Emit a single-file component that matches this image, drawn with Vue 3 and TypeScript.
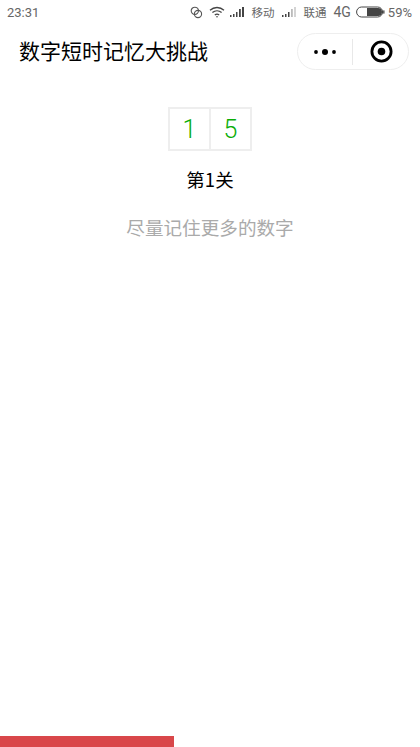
<script setup lang="ts">
const digits: string[] = ['1', '5']
const progress = 41.4
</script>

<template>
  <div class="page">
    <div class="status">
      <span class="time">23:31</span>
      <div class="status-right">
        <svg class="ico" width="13" height="13" viewBox="0 0 14 14" fill="none" stroke="#555" stroke-width="1.2">
          <circle cx="5.2" cy="5.2" r="3.9" />
          <circle cx="8.6" cy="8.6" r="3.9" />
        </svg>
        <svg class="ico wifi" width="16" height="12" viewBox="0 0 16 12" fill="none" stroke="#444" stroke-width="1.3">
          <path d="M1 4.2C5 .6 11 .6 15 4.2" />
          <path d="M3.4 6.6c2.7-2.3 6.5-2.3 9.2 0" />
          <path d="M5.8 9c1.3-1 3.1-1 4.4 0" />
          <circle cx="8" cy="10.8" r=".8" fill="#444" stroke="none" />
        </svg>
        <svg class="ico sig" width="15" height="10" viewBox="0 0 15 10" fill="#444">
          <rect x="0" y="8" width="1.5" height="2" />
          <rect x="3" y="7" width="1.5" height="3" />
          <rect x="6" y="5" width="1.5" height="5" />
          <rect x="9" y="2" width="1.8" height="8" />
          <rect x="12" y="0" width="2" height="10" />
        </svg>
        <span class="carrier">移动</span>
        <svg class="ico sig2" width="15" height="10" viewBox="0 0 15 10" fill="#444">
          <rect x="0" y="8" width="1.5" height="2" />
          <rect x="3" y="7" width="1.5" height="3" />
          <rect x="6" y="5" width="1.5" height="5" />
          <rect x="9" y="2" width="1.8" height="8" fill="#bbb" />
          <rect x="12" y="0" width="2" height="10" fill="#d4d4d4" />
        </svg>
        <span class="carrier">联通</span>
        <span class="net">4G</span>
        <svg class="ico batt" width="29" height="12" viewBox="0 0 29 12" fill="none">
          <rect x=".6" y="1" width="26" height="10" rx="5" stroke="#444" stroke-width="1" />
          <path d="M11 2h11a4 4 0 0 1 0 8H11z" fill="#444" />
          <rect x="27.2" y="4.4" width="1.3" height="3.2" fill="#444" />
        </svg>
        <span class="pct">59%</span>
      </div>
    </div>

    <header class="nav">
      <h1 class="title">数字短时记忆大挑战</h1>
      <div class="capsule">
        <div class="cap-side">
          <svg width="24" height="8" viewBox="0 0 24 8" fill="#000">
            <circle cx="3" cy="4" r="1.9" />
            <circle cx="12" cy="4" r="3" />
            <circle cx="21" cy="4" r="1.9" />
          </svg>
        </div>
        <span class="cap-line"></span>
        <div class="cap-side ring">
          <svg width="23" height="23" viewBox="0 0 23 23" fill="none">
            <circle cx="11.5" cy="11.5" r="9.6" stroke="#000" stroke-width="2.8" />
            <circle cx="11.5" cy="11.5" r="3.8" fill="#000" />
          </svg>
        </div>
      </div>
    </header>

    <main class="content">
      <div class="cells">
        <div v-for="(d, i) in digits" :key="i" class="cell">{{ d }}</div>
      </div>
      <div class="level">第1关</div>
      <div class="hint">尽量记住更多的数字</div>
    </main>

    <div class="bar" :style="{ width: progress + '%' }"></div>
  </div>
</template>

<style>
html, body { margin: 0; background: #fff; }
</style>

<style scoped>
.page {
  width: 420px;
  height: 747px;
  display: flex;
  flex-direction: column;
  background: #fff;
  font-family: "Noto Sans CJK SC", "Noto Sans", sans-serif;
  overflow: hidden;
}
.status {
  height: 24px;
  flex: none;
  display: flex;
  align-items: center;
  justify-content: space-between;
  padding: 0 8px 0 7px;
  box-sizing: border-box;
  color: #666;
}
.time {
  font-family: Roboto, sans-serif;
  font-size: 13px;
}
.status-right {
  display: flex;
  align-items: center;
}
.ico { flex: none; display: block; }
.wifi { margin-left: 6px; }
.sig { margin-left: 5px; }
.carrier { font-size: 11.5px; margin-left: 6px; color: #666; }
.sig2 { margin-left: 8px; }
.net { font-family: Roboto, sans-serif; font-size: 14px; margin-left: 7px; }
.batt { margin-left: 5px; }
.pct { font-family: Roboto, sans-serif; font-size: 13px; margin-left: 3px; }
.nav {
  height: 55px;
  flex: none;
  display: flex;
  align-items: center;
  justify-content: space-between;
  padding: 0 11px 0 19px;
}
.title {
  margin: 0 0 3px;
  font-size: 21px;
  line-height: 28px;
  font-weight: 400;
  color: #000;
}
.capsule {
  width: 112px;
  height: 37px;
  box-sizing: border-box;
  border: 1px solid #eeeeee;
  border-radius: 19px;
  display: flex;
  align-items: center;
}
.cap-side {
  flex: 1;
  display: flex;
  justify-content: center;
  align-items: center;
}
.ring { padding-left: 1px; }
.cap-line {
  width: 1px;
  height: 26px;
  background: #e8e8e8;
}
.content {
  flex: 1;
  display: flex;
  flex-direction: column;
  align-items: center;
  padding-top: 28px;
}
.cells {
  display: flex;
  border: 1px solid #eeeeee;
}
.cell {
  width: 39px;
  height: 40px;
  border: 1px solid #eeeeee;
  display: flex;
  align-items: center;
  justify-content: center;
  font-family: Roboto, sans-serif;
  font-weight: 300;
  font-size: 25px;
  color: #09ad07;
}
.level {
  margin-top: 15px;
  font-size: 18.5px;
  line-height: 26px;
  color: #000;
}
.hint {
  margin-top: 22px;
  font-size: 18.6px;
  line-height: 26px;
  color: #aaaaaa;
}
.bar {
  flex: none;
  height: 10.6px;
  background: #d9474a;
}
</style>
